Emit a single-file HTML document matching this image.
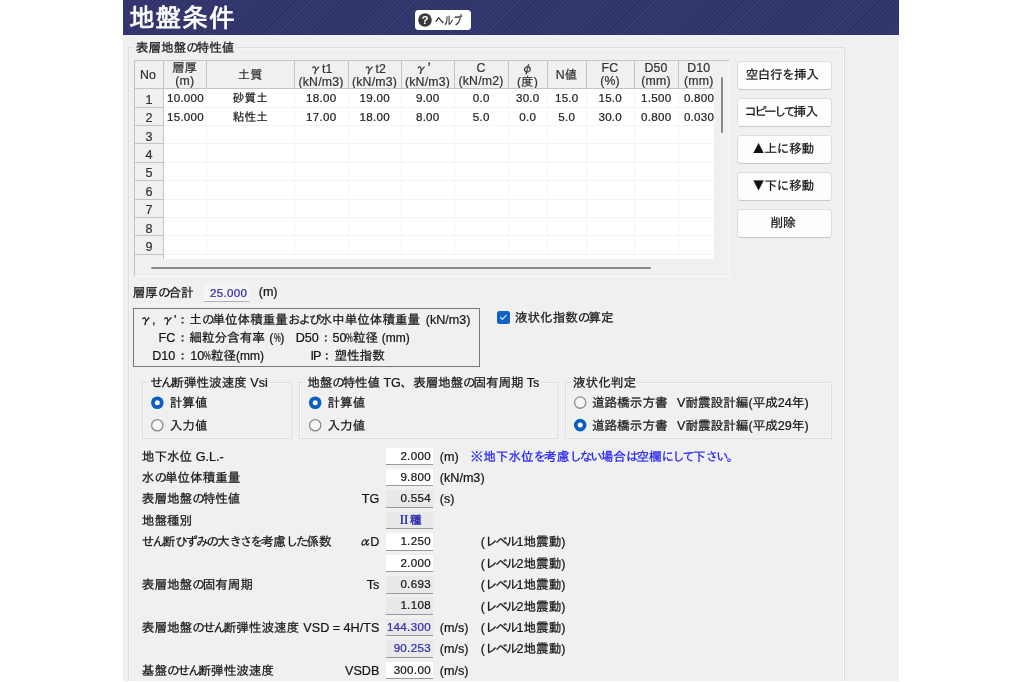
<!DOCTYPE html><html lang="ja"><head><meta charset="utf-8"><title>地盤条件</title><style>
*{box-sizing:border-box;margin:0;padding:0}
html,body{width:1024px;height:682px;overflow:hidden;background:#fff}
body{font-family:"Liberation Sans","IPAGothic",sans-serif;font-size:12.6px;color:#151515;-webkit-text-stroke:0.22px;line-height:14px;position:relative}
#win{position:absolute;left:123px;top:0;width:776px;height:681px;background:#f0f0f0;overflow:hidden;will-change:transform}
#hdr{position:absolute;left:0;top:0;width:776px;height:35px;background:#2f3169;background-image:repeating-linear-gradient(135deg,#2f3169 0,#2f3169 1.6px,#373971 1.6px,#373971 3.2px)}
#ttl{position:absolute;left:6px;top:2px;font-size:26px;line-height:32px;font-weight:normal;-webkit-text-stroke:0.7px #fff;color:#fff;letter-spacing:0.5px}
#help{position:absolute;left:291.5px;top:10px;width:56.5px;height:20px;background:#fff;border-radius:3.5px;font-size:11px;color:#222}
#help svg{position:absolute;left:3.5px;top:3.2px}
#help span{position:absolute;left:20.3px;top:4px;white-space:nowrap;font-size:12.5px;transform:scaleX(0.73);transform-origin:0 0}
.abs{position:absolute;white-space:nowrap}
.gb{position:absolute;border:1px solid #dedede;box-shadow:inset 0 0 0 1px #f6f6f6}
.gbl{position:absolute;background:#f0f0f0;white-space:nowrap;padding:0 2px}
.hc{position:absolute;top:0;height:28px;font-size:12.3px;letter-spacing:0.2px;padding-right:1px;border-right:1px solid #c4c4c4;border-bottom:1px solid #c4c4c4;text-align:center;line-height:13.5px;padding-top:0.5px;color:#333;white-space:nowrap;overflow:hidden}
.hc.one{line-height:27px}
.rh{position:absolute;left:0;width:29px;border-right:1px solid #c4c4c4;border-bottom:1px solid #c4c4c4;text-align:center;color:#333}
.c{position:absolute;font-size:11.6px;letter-spacing:0.25px;padding-right:1.5px;text-align:center;white-space:nowrap;overflow:hidden;color:#222}
.btn{position:absolute;left:614px;width:95px;height:28.6px;background:#fdfdfd;border:1px solid #dedede;border-bottom-color:#c9c9c9;border-radius:4px;text-align:center;padding-right:3px;line-height:26.6px;white-space:nowrap;color:#111}
.fld{position:absolute;font-size:11.6px;letter-spacing:0.3px;height:17.5px;border-bottom:1.3px solid #999;text-align:right;padding-right:2px;line-height:15.5px;white-space:nowrap}
.j{font-family:"IPAGothic",sans-serif}
.k{letter-spacing:-2.1px}
.pc{display:inline-block;width:6.6px;transform:scaleX(0.6);transform-origin:0 50%}
.w{background:#fff}.g{background:#e9e9e9}.b{color:#2b2bb0}
.rad{position:absolute;width:12.8px;height:12.8px;border-radius:50%;box-shadow:inset 0 0 0 1.35px #8a8a8a;background:#f6f6f6}
.rad.on{box-shadow:inset 0 0 0 3.9px #0a5ec2;background:#fff}
</style></head><body><div id="win">
<div id="hdr"><div id="ttl">地盤条件</div><div id="help"><svg width="14" height="14" viewBox="0 0 14 14"><circle cx="7" cy="7" r="6.8" fill="#3a3a3a"/><text x="7" y="11" text-anchor="middle" font-family="Liberation Sans,sans-serif" font-weight="bold" font-size="11.5" fill="#fff">?</text></svg><span>ヘルプ</span></div></div>
<div class="gb" style="left:5.4px;top:47px;width:716.8px;height:700px"></div>
<div class="gbl" style="left:10.8px;top:41px">表層地盤<span class="k">の</span>特性値</div>
<div class="abs" id="tbl" style="left:11px;top:60.3px;width:596px;height:216.7px;border:1px solid #c4c4c4;border-right-color:#fafafa;border-bottom-color:#fafafa;overflow:hidden">
<div class="abs" style="left:0;top:0;width:578.5px;height:198.2px;overflow:hidden">
<div class="abs" style="left:29px;top:28px;width:549.5px;height:170.3px;background:#fff"></div>
<div class="abs" style="left:71.4px;top:28px;width:1px;height:170.3px;background:#f4f4f4"></div>
<div class="abs" style="left:159px;top:28px;width:1px;height:170.3px;background:#f4f4f4"></div>
<div class="abs" style="left:213px;top:28px;width:1px;height:170.3px;background:#f4f4f4"></div>
<div class="abs" style="left:266px;top:28px;width:1px;height:170.3px;background:#f4f4f4"></div>
<div class="abs" style="left:319px;top:28px;width:1px;height:170.3px;background:#f4f4f4"></div>
<div class="abs" style="left:373px;top:28px;width:1px;height:170.3px;background:#f4f4f4"></div>
<div class="abs" style="left:412px;top:28px;width:1px;height:170.3px;background:#f4f4f4"></div>
<div class="abs" style="left:451px;top:28px;width:1px;height:170.3px;background:#f4f4f4"></div>
<div class="abs" style="left:499px;top:28px;width:1px;height:170.3px;background:#f4f4f4"></div>
<div class="abs" style="left:543px;top:28px;width:1px;height:170.3px;background:#f4f4f4"></div>
<div class="abs" style="left:29px;top:45.4px;width:549.5px;height:1px;background:#f4f4f4"></div>
<div class="abs" style="left:29px;top:63.8px;width:549.5px;height:1px;background:#f4f4f4"></div>
<div class="abs" style="left:29px;top:82.2px;width:549.5px;height:1px;background:#f4f4f4"></div>
<div class="abs" style="left:29px;top:100.6px;width:549.5px;height:1px;background:#f4f4f4"></div>
<div class="abs" style="left:29px;top:119.0px;width:549.5px;height:1px;background:#f4f4f4"></div>
<div class="abs" style="left:29px;top:137.4px;width:549.5px;height:1px;background:#f4f4f4"></div>
<div class="abs" style="left:29px;top:155.8px;width:549.5px;height:1px;background:#f4f4f4"></div>
<div class="abs" style="left:29px;top:174.2px;width:549.5px;height:1px;background:#f4f4f4"></div>
<div class="abs" style="left:29px;top:192.6px;width:549.5px;height:1px;background:#f4f4f4"></div>
<div class="hc one" style="left:-1px;width:30px">No</div>
<div class="hc" style="left:29px;width:43.4px">層厚<br>(m)</div>
<div class="hc one" style="left:72.4px;width:87.6px">土質</div>
<div class="hc" style="left:160px;width:54px"><span class="j">γ</span>t1<br>(kN/m3)</div>
<div class="hc" style="left:214px;width:53px"><span class="j">γ</span>t2<br>(kN/m3)</div>
<div class="hc" style="left:267px;width:53px"><span class="j">γ’</span><br>(kN/m3)</div>
<div class="hc" style="left:320px;width:54px">C<br>(kN/m2)</div>
<div class="hc" style="left:374px;width:39px"><span class="j">φ</span><br>(度)</div>
<div class="hc one" style="left:413px;width:39px">N値</div>
<div class="hc" style="left:452px;width:48px">FC<br>(%)</div>
<div class="hc" style="left:500px;width:44px">D50<br>(mm)</div>
<div class="hc" style="left:544px;width:41.6px">D10<br>(mm)</div>
<div class="rh" style="top:28.0px;height:18.4px;line-height:19.4px;padding-top:1.6px">1</div>
<div class="rh" style="top:46.4px;height:18.4px;line-height:19.4px;padding-top:1.6px">2</div>
<div class="rh" style="top:64.8px;height:18.4px;line-height:19.4px;padding-top:1.6px">3</div>
<div class="rh" style="top:83.2px;height:18.4px;line-height:19.4px;padding-top:1.6px">4</div>
<div class="rh" style="top:101.6px;height:18.4px;line-height:19.4px;padding-top:1.6px">5</div>
<div class="rh" style="top:120.0px;height:18.4px;line-height:19.4px;padding-top:1.6px">6</div>
<div class="rh" style="top:138.4px;height:18.4px;line-height:19.4px;padding-top:1.6px">7</div>
<div class="rh" style="top:156.8px;height:18.4px;line-height:19.4px;padding-top:1.6px">8</div>
<div class="rh" style="top:175.2px;height:18.4px;line-height:19.4px;padding-top:1.6px">9</div>
<div class="rh" style="top:193.6px;height:18.4px;line-height:19.4px;padding-top:1.6px"></div>
<div class="c" style="left:29px;top:28.0px;width:43.4px;height:18.4px;line-height:18.4px;text-align:left;padding-left:3px;">10.000</div>
<div class="c" style="left:72.4px;top:28.0px;width:87.6px;height:18.4px;line-height:18.4px;">砂質土</div>
<div class="c" style="left:160px;top:28.0px;width:54px;height:18.4px;line-height:18.4px;">18.00</div>
<div class="c" style="left:214px;top:28.0px;width:53px;height:18.4px;line-height:18.4px;">19.00</div>
<div class="c" style="left:267px;top:28.0px;width:53px;height:18.4px;line-height:18.4px;">9.00</div>
<div class="c" style="left:320px;top:28.0px;width:54px;height:18.4px;line-height:18.4px;">0.0</div>
<div class="c" style="left:374px;top:28.0px;width:39px;height:18.4px;line-height:18.4px;">30.0</div>
<div class="c" style="left:413px;top:28.0px;width:39px;height:18.4px;line-height:18.4px;">15.0</div>
<div class="c" style="left:452px;top:28.0px;width:48px;height:18.4px;line-height:18.4px;">15.0</div>
<div class="c" style="left:500px;top:28.0px;width:44px;height:18.4px;line-height:18.4px;">1.500</div>
<div class="c" style="left:544px;top:28.0px;width:41.6px;height:18.4px;line-height:18.4px;">0.800</div>
<div class="c" style="left:29px;top:46.4px;width:43.4px;height:18.4px;line-height:18.4px;text-align:left;padding-left:3px;">15.000</div>
<div class="c" style="left:72.4px;top:46.4px;width:87.6px;height:18.4px;line-height:18.4px;">粘性土</div>
<div class="c" style="left:160px;top:46.4px;width:54px;height:18.4px;line-height:18.4px;">17.00</div>
<div class="c" style="left:214px;top:46.4px;width:53px;height:18.4px;line-height:18.4px;">18.00</div>
<div class="c" style="left:267px;top:46.4px;width:53px;height:18.4px;line-height:18.4px;">8.00</div>
<div class="c" style="left:320px;top:46.4px;width:54px;height:18.4px;line-height:18.4px;">5.0</div>
<div class="c" style="left:374px;top:46.4px;width:39px;height:18.4px;line-height:18.4px;">0.0</div>
<div class="c" style="left:413px;top:46.4px;width:39px;height:18.4px;line-height:18.4px;">5.0</div>
<div class="c" style="left:452px;top:46.4px;width:48px;height:18.4px;line-height:18.4px;">30.0</div>
<div class="c" style="left:500px;top:46.4px;width:44px;height:18.4px;line-height:18.4px;">0.800</div>
<div class="c" style="left:544px;top:46.4px;width:41.6px;height:18.4px;line-height:18.4px;">0.030</div>
</div>
<div class="abs" style="left:586.3px;top:16.200000000000003px;width:2px;height:56px;background:#8a8a8a;border-radius:1px"></div>
<div class="abs" style="left:16px;top:205.7px;width:499.5px;height:2px;background:#8a8a8a;border-radius:1px"></div>
</div>
<div class="btn" style="top:61.2px"><span style="letter-spacing:-0.5px;margin-right:2px">空白行を挿入</span></div>
<div class="btn" style="top:98.2px"><span style="letter-spacing:-2.8px">コピーして</span><span style="letter-spacing:-0.5px;margin-right:4px">挿入</span></div>
<div class="btn" style="top:135.2px"><span class="j" style="letter-spacing:-0.3px">▲上に移動</span></div>
<div class="btn" style="top:172.2px"><span class="j" style="letter-spacing:-0.3px">▼下に移動</span></div>
<div class="btn" style="top:209.2px">削除</div>
<div class="abs" style="left:9.7px;top:286px">層厚<span class="k">の</span>合計</div>
<div class="fld b" style="left:80.6px;top:284.5px;width:45.7px;background:#f5f5f5;border-bottom-color:#b0b0b0">25.000</div>
<div class="abs" style="left:135.7px;top:285px">(m)</div>
<div class="abs" style="left:10px;top:308px;width:347px;height:59px;border:1px solid #777"></div>
<div class="abs" style="right:722.5px;top:312.5px"><span class="j">γ</span><span style="letter-spacing:1.2px">, </span><span class="j">γ</span>'</div>
<div class="abs" style="left:53.2px;top:312.5px">：</div>
<div class="abs" style="left:66.3px;top:312.5px">土<span class="k">の</span>単位体積重量<span class="k">および</span>水中単位体積重量<span style="margin-left:5.5px">(kN/m3)</span></div>
<div class="abs" style="right:723.7px;top:331px">FC</div>
<div class="abs" style="left:53.2px;top:331px">：</div>
<div class="abs" style="left:66.3px;top:331px">細粒分含有率<span style="margin-left:4.5px">(<span class="pc">%</span>)</span></div>
<div class="abs" style="right:580.2px;top:331px">D50</div>
<div class="abs" style="left:196.5px;top:331px">：</div>
<div class="abs" style="left:209.4px;top:331px">50<span class="pc">%</span>粒径<span style="margin-left:3.5px;font-size:12px">(mm)</span></div>
<div class="abs" style="right:723.7px;top:348.5px">D10</div>
<div class="abs" style="left:53.2px;top:348.5px">：</div>
<div class="abs" style="left:66.3px;top:348.5px"><span style="margin-left:1px">10</span><span class="pc">%</span>粒径<span style="font-size:12px">(mm)</span></div>
<div class="abs" style="right:578.5px;top:348.5px"><span style="letter-spacing:-1px">IP</span></div>
<div class="abs" style="left:197.5px;top:348.5px">：</div>
<div class="abs" style="left:211.4px;top:348.5px">塑性指数</div>
<div class="abs" style="left:374.3px;top:311px;width:12.5px;height:12.5px;background:#0f62c4;border-radius:2.5px"><svg width="12.5" height="12.5" viewBox="0 0 12.5 12.5" style="position:absolute;left:0;top:0"><path d="M3.4 6.4 L5.4 8.4 L9.2 4.3" stroke="#e4ecf8" stroke-width="1.1" fill="none" stroke-linecap="round" stroke-linejoin="round"/></svg></div>
<div class="abs" style="left:391.9px;top:311px">液状化指数<span class="k">の</span>算定</div>
<div class="gb" style="left:19px;top:382px;width:150px;height:57px"></div>
<div class="gbl" style="left:25.3px;top:375.7px"><span class="k">せん</span>断弾性波速度 Vsi</div>
<div class="gb" style="left:176px;top:382px;width:259px;height:57px"></div>
<div class="gbl" style="left:182.2px;top:375.7px"><span style="letter-spacing:-0.12px">地盤<span class="k">の</span>特性値 TG、表層地盤<span class="k">の</span>固有周期 Ts</span></div>
<div class="gb" style="left:442px;top:382px;width:267px;height:57px"></div>
<div class="gbl" style="left:448px;top:375.7px">液状化判定</div>
<svg class="abs" style="left:26px;top:394px" width="16" height="16" viewBox="0 0 16 16"><circle cx="8.3" cy="8.8" r="6.3" fill="#0a5ec2"/><circle cx="8.3" cy="8.8" r="2.5" fill="#fff"/></svg>
<div class="abs" style="left:46.7px;top:396.2px">計算値</div>
<svg class="abs" style="left:26px;top:417px" width="16" height="16" viewBox="0 0 16 16"><circle cx="8.3" cy="8.3" r="5.65" fill="#f6f6f6" stroke="#8a8a8a" stroke-width="1.3"/></svg>
<div class="abs" style="left:46.7px;top:418.7px">入力値</div>
<svg class="abs" style="left:184px;top:394px" width="16" height="16" viewBox="0 0 16 16"><circle cx="8.2" cy="8.8" r="6.3" fill="#0a5ec2"/><circle cx="8.2" cy="8.8" r="2.5" fill="#fff"/></svg>
<div class="abs" style="left:204.5px;top:396.2px">計算値</div>
<svg class="abs" style="left:184px;top:417px" width="16" height="16" viewBox="0 0 16 16"><circle cx="8.2" cy="8.3" r="5.65" fill="#f6f6f6" stroke="#8a8a8a" stroke-width="1.3"/></svg>
<div class="abs" style="left:204.5px;top:418.7px">入力値</div>
<svg class="abs" style="left:449px;top:394px" width="16" height="16" viewBox="0 0 16 16"><circle cx="8.2" cy="8.6" r="5.65" fill="#f6f6f6" stroke="#8a8a8a" stroke-width="1.3"/></svg>
<div class="abs" style="left:469px;top:396.0px">道路橋示方書<span style="margin-left:9.5px">V</span>耐震設計編(平成24年)</div>
<svg class="abs" style="left:449px;top:417px" width="16" height="16" viewBox="0 0 16 16"><circle cx="8.2" cy="8.1" r="6.3" fill="#0a5ec2"/><circle cx="8.2" cy="8.1" r="2.5" fill="#fff"/></svg>
<div class="abs" style="left:469px;top:418.5px">道路橋示方書<span style="margin-left:9.5px">V</span>耐震設計編(平成29年)</div>
<div class="abs" style="left:18.8px;top:449.6px">地下水位 G.L.-</div>
<div class="fld w " style="left:263.3px;top:447.5px;width:46.6px;">2.000</div>
<div class="abs" style="left:316.8px;top:449.6px">(m)</div>
<div class="abs" style="left:18.8px;top:471.02px">水<span class="k">の</span>単位体積重量</div>
<div class="fld w " style="left:263.3px;top:468.92px;width:46.6px;">9.800</div>
<div class="abs" style="left:316.8px;top:471.02px">(kN/m3)</div>
<div class="abs" style="left:18.8px;top:492.44px">表層地盤<span class="k">の</span>特性値</div>
<div class="abs" style="right:519.7px;top:492.44px">TG</div>
<div class="fld g " style="left:263.3px;top:490.34px;width:46.6px;">0.554</div>
<div class="abs" style="left:316.8px;top:492.44px">(s)</div>
<div class="abs" style="left:18.8px;top:513.86px">地盤種別</div>
<div class="fld g b" style="left:263.3px;top:511.76px;width:46.6px;text-align:left;padding-right:0;padding-left:14.5px;"><span style="font-family:'Noto Serif CJK SC',serif;font-weight:bold;letter-spacing:-3.5px;margin-left:-2.5px;-webkit-text-stroke:0">Ⅱ</span><span style="margin-left:3.6px;-webkit-text-stroke:0.5px">種</span></div>
<div class="abs" style="left:18.8px;top:535.28px"><span style="letter-spacing:-0.27px"><span class="k">せん</span>断<span class="k">ひずみの</span>大<span class="k">きさを</span>考慮<span class="k">した</span>係数</span></div>
<div class="abs" style="right:519.7px;top:535.28px"><span class="j" style="letter-spacing:-1.5px">α</span>D</div>
<div class="fld w " style="left:263.3px;top:533.18px;width:46.6px;">1.250</div>
<div class="abs" style="left:357.8px;top:535.28px">(<span class="k">レベル</span>1地震動)</div>
<div class="fld w " style="left:263.3px;top:554.6px;width:46.6px;">2.000</div>
<div class="abs" style="left:357.8px;top:556.7px">(<span class="k">レベル</span>2地震動)</div>
<div class="abs" style="left:18.8px;top:578.12px">表層地盤<span class="k">の</span>固有周期</div>
<div class="abs" style="right:519.7px;top:578.12px">Ts</div>
<div class="fld g " style="left:263.3px;top:576.02px;width:46.6px;">0.693</div>
<div class="abs" style="left:357.8px;top:578.12px">(<span class="k">レベル</span>1地震動)</div>
<div class="fld g " style="left:263.3px;top:597.44px;width:46.6px;">1.108</div>
<div class="abs" style="left:357.8px;top:599.54px">(<span class="k">レベル</span>2地震動)</div>
<div class="abs" style="left:18.8px;top:620.96px">表層地盤<span class="k">のせん</span>断弾性波速度</div>
<div class="abs" style="right:519.7px;top:620.96px">VSD = 4H/TS</div>
<div class="fld g b" style="left:263.3px;top:618.86px;width:46.6px;">144.300</div>
<div class="abs" style="left:316.8px;top:620.96px">(m/s)</div>
<div class="abs" style="left:357.8px;top:620.96px">(<span class="k">レベル</span>1地震動)</div>
<div class="fld g b" style="left:263.3px;top:640.28px;width:46.6px;">90.253</div>
<div class="abs" style="left:316.8px;top:642.38px">(m/s)</div>
<div class="abs" style="left:357.8px;top:642.38px">(<span class="k">レベル</span>2地震動)</div>
<div class="abs" style="left:18.8px;top:663.8px">基盤<span class="k">のせん</span>断弾性波速度</div>
<div class="abs" style="right:519.7px;top:663.8px">VSDB</div>
<div class="fld w " style="left:263.3px;top:661.7px;width:46.6px;">300.00</div>
<div class="abs" style="left:316.8px;top:663.8px">(m/s)</div>
<div class="abs" style="left:347.6px;top:449.6px;color:#1c1cf5">※地下水位<span class="k">を</span>考慮<span class="k">しない</span>場合<span class="k">は</span>空欄<span class="k">にして</span>下<span class="k">さい</span>。</div>
</div></body></html>
